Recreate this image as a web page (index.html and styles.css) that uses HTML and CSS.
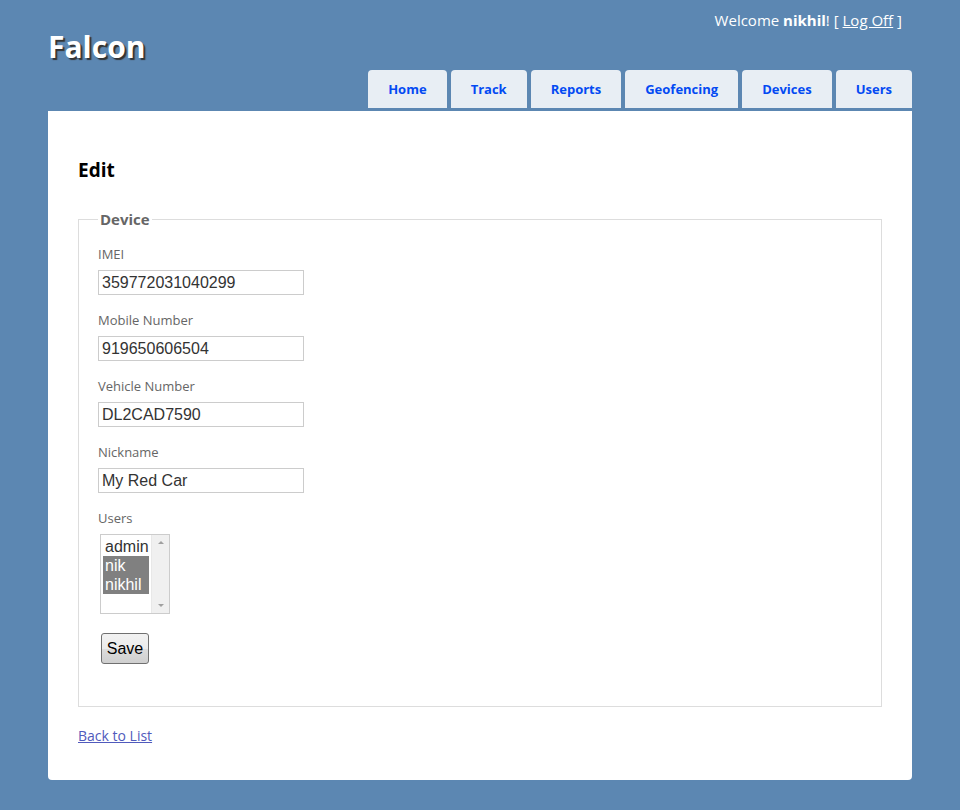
FILE: index.html
```html
<!DOCTYPE html>
<html>
<head>
<meta charset="utf-8">
<link rel="stylesheet" href="styles.css">
<title>Edit</title>
</head>
<body>
<div class="page">
  <div class="header">
    <div class="login">Welcome <b>nikhil</b>! [ <a href="#" class="logoff">Log Off</a> ]</div>
    <h1 class="title">Falcon</h1>
    <ul class="menu">
      <li><a href="#">Home</a></li>
      <li><a href="#">Track</a></li>
      <li><a href="#">Reports</a></li>
      <li><a href="#">Geofencing</a></li>
      <li><a href="#">Devices</a></li>
      <li><a href="#">Users</a></li>
    </ul>
  </div>
  <div class="main">
    <h2 class="heading">Edit</h2>
    <fieldset class="fs">
      <legend class="legend">Device</legend>
      <div class="field">
        <label class="lbl">IMEI</label>
        <input class="txt" type="text" value="359772031040299">
      </div>
      <div class="field">
        <label class="lbl">Mobile Number</label>
        <input class="txt" type="text" value="919650606504">
      </div>
      <div class="field">
        <label class="lbl">Vehicle Number</label>
        <input class="txt" type="text" value="DL2CAD7590">
      </div>
      <div class="field">
        <label class="lbl">Nickname</label>
        <input class="txt" type="text" value="My Red Car">
      </div>
      <div class="field">
        <label class="lbl">Users</label>
        <div class="listbox">
          <div class="options">
            <div class="opt">admin</div>
            <div class="opt sel">nik</div>
            <div class="opt sel">nikhil</div>
          </div>
          <div class="scroll">
            <span class="arr up"></span>
            <span class="arr down"></span>
          </div>
        </div>
      </div>
      <div class="actions">
        <button class="btn" type="button">Save</button>
      </div>
    </fieldset>
    <div class="back"><a href="#" class="backlink">Back to List</a></div>
  </div>
</div>
</body>
</html>
```
FILE: styles.css
```css
html, body {
  margin: 0;
  padding: 0;
}
body {
  background: #5c87b2;
  font-family: "Open Sans", "DejaVu Sans", sans-serif;
  color: #696969;
}
.page {
  width: 864px;
  margin: 0 auto;
  padding-bottom: 30px;
}
.header {
  display: flex;
  flex-direction: column;
}
.login {
  align-self: flex-end;
  color: #fff;
  font-size: 15px;
  line-height: 18px;
  margin-top: 11px;
  margin-right: 10px;
}
.login b { font-weight: bold; }
.logoff { color: #fff; }
.title {
  margin: 0;
  font-size: 30px;
  line-height: 36px;
  font-weight: bold;
  color: #fff;
  text-shadow: 2px 2px 1px #333;
}
.menu {
  list-style: none;
  margin: 5px 0 0 0;
  padding: 0;
  display: flex;
  justify-content: flex-end;
  gap: 4px;
}
.menu li { display: block; }
.menu a {
  display: block;
  height: 38px;
  line-height: 38px;
  padding: 0 20px;
  background: #e8eef4;
  border-radius: 4px 4px 0 0;
  color: #034af3;
  font-weight: bold;
  font-size: 13px;
  text-decoration: none;
}
.main {
  margin-top: 3px;
  background: #fff;
  border-radius: 0 0 4px 4px;
  padding: 30px 30px 35px;
}
.heading {
  margin: 17px 0 27px;
  font-size: 19px;
  line-height: 24px;
  color: #000;
  font-weight: bold;
}
.fs {
  margin: 0;
  border: 1px solid #ddd;
  padding: 0 19px 42px;
}
.legend {
  padding: 0 2px;
  font-size: 15px;
  font-weight: bold;
  color: #666;
}
.field {
  display: flex;
  flex-direction: column;
  align-items: flex-start;
  margin-top: 16px;
}
.lbl {
  font-size: 13px;
  line-height: 18px;
  color: #666;
  margin-bottom: 7px;
}
.txt {
  box-sizing: border-box;
  width: 206px;
  height: 25px;
  margin: 0;
  border: 1px solid #ccc;
  padding: 1px 3px;
  font-family: "Liberation Sans", Arial, sans-serif;
  font-size: 16px;
  color: #333;
  outline: none;
}
.listbox {
  margin-left: 2px;
  width: 70px;
  height: 80px;
  box-sizing: border-box;
  border: 1px solid #ccc;
  display: flex;
  font-family: "Liberation Sans", Arial, sans-serif;
  font-size: 16px;
  color: #333;
}
.options {
  flex: 1;
  padding: 2px 2px;
}
.opt {
  line-height: 19px;
  padding-left: 2px;
}
.opt.sel {
  background: #808080;
  color: #fff;
}
.scroll {
  width: 17px;
  background: #f0f0f0;
  border-left: 1px solid #e8e8e8;
  display: flex;
  flex-direction: column;
  justify-content: space-between;
  align-items: center;
  padding: 6px 0;
}
.arr {
  width: 0;
  height: 0;
  border-left: 3px solid transparent;
  border-right: 3px solid transparent;
}
.arr.up { border-bottom: 3px solid #a0a0a0; }
.arr.down { border-top: 3px solid #a0a0a0; }
.actions {
  margin-top: 19px;
  padding-left: 3px;
}
.btn {
  width: 48px;
  height: 31px;
  border: 1px solid #707070;
  border-radius: 3px;
  background: linear-gradient(#f2f2f2, #ebebeb 50%, #dddddd 50%, #cfcfcf);
  font-family: "Liberation Sans", Arial, sans-serif;
  font-size: 16px;
  color: #000;
  padding: 0;
}
.back {
  margin-top: 20px;
  font-size: 14px;
  line-height: 18px;
}
.backlink { color: #505abc; }
```
